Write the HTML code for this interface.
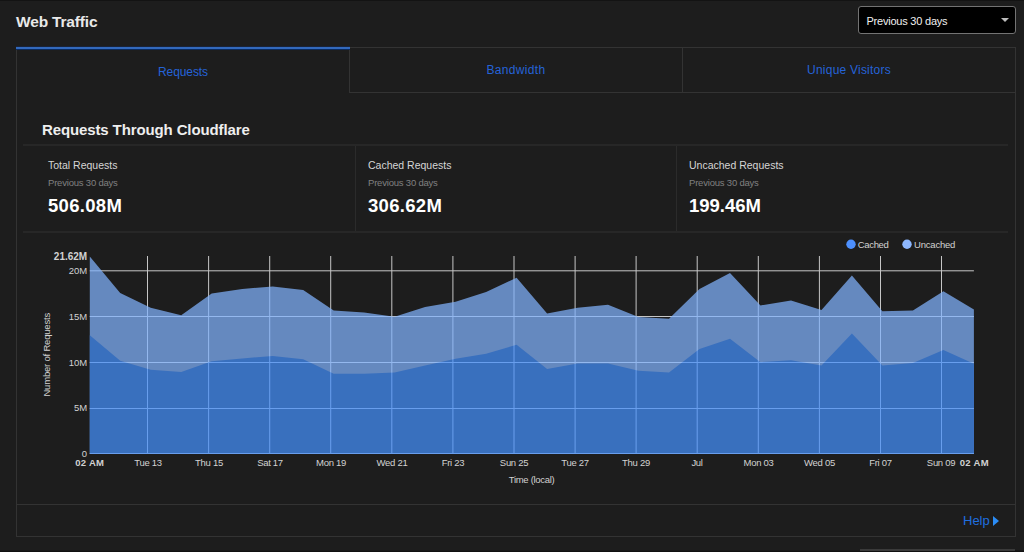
<!DOCTYPE html>
<html lang="en">
<head>
<meta charset="utf-8">
<title>Web Traffic</title>
<style>
html,body{margin:0;padding:0;}
body{width:1024px;height:552px;position:relative;overflow:hidden;background:#1d1d1d;font-family:"Liberation Sans",sans-serif;color:#e8e8e8;}
.abs{position:absolute;white-space:nowrap;}
.topband{left:0;top:0;width:1024px;height:1px;background:#131313;}
.botband{left:0;top:550px;width:1024px;height:1px;background:#181818;border-bottom:1px solid #101010;}
.botline{left:860px;top:549px;width:155px;height:2px;background:#3a3a3a;}
h1{margin:0;font-size:15.5px;font-weight:bold;line-height:20px;left:16px;top:12px;color:#e9e9e9;letter-spacing:-0.17px;}
.select{left:858px;top:6px;width:156px;height:26px;border:1px solid #737373;border-radius:3px;background:#000;}
.select span{left:7.5px;top:6.5px;font-size:11px;line-height:14px;color:#f0f0f0;letter-spacing:-0.22px;}
.select i{left:142px;top:11px;width:0;height:0;border-left:4px solid transparent;border-right:4px solid transparent;border-top:4.5px solid #bdbdbd;}
.panel{left:16px;top:47px;width:998px;height:488px;border:1px solid #333333;}
.tab{top:47px;height:45px;line-height:47px;text-align:center;font-size:12px;color:#2563d8;border-bottom:1px solid #333333;}
.tab.t1{left:17px;width:332px;border-bottom-color:transparent;line-height:50px;letter-spacing:-0.1px;}
.tab.t2{left:349px;width:332px;border-left:1px solid #333333;letter-spacing:0.33px;}
.tab.t3{left:682px;width:332px;border-left:1px solid #333333;letter-spacing:0.22px;}
.activebar{left:16px;top:47px;width:334px;height:2px;background:#3269bd;border-bottom:1px solid #0b2a5c;box-shadow:0 -1px 0 rgba(20,50,110,0.35);}
h2{margin:0;font-size:15px;font-weight:bold;line-height:20px;left:42px;top:120px;color:#eeeeee;letter-spacing:-0.12px;}
.hline{height:1px;background:#333;}
.vline{width:1px;background:#2b2b2b;}
.st-title{font-size:10.5px;line-height:14px;color:#d6d6d6;}
.st-sub{font-size:9.5px;line-height:12px;color:#808080;letter-spacing:-0.2px;margin-top:0.5px;}
.st-val{font-size:18.5px;font-weight:bold;line-height:22px;color:#fff;letter-spacing:0.3px;}
.help{left:963px;top:513px;font-size:13px;line-height:16px;color:#1f6fe0;}
.helparrow{left:993px;top:516px;width:0;height:0;border-top:5px solid transparent;border-bottom:5px solid transparent;border-left:6.5px solid #2b8cf5;}
svg{position:absolute;left:0;top:0;}
svg text{font-family:"Liberation Sans",sans-serif;fill:#d2d2d2;}
</style>
</head>
<body>
<h1 class="abs">Web Traffic</h1>
<div class="abs select"><span class="abs">Previous 30 days</span><i class="abs"></i></div>

<div class="abs panel"></div>
<div class="abs tab t1">Requests</div>
<div class="abs tab t2">Bandwidth</div>
<div class="abs tab t3">Unique Visitors</div>
<div class="abs activebar"></div>

<h2 class="abs">Requests Through Cloudflare</h2>
<div class="abs hline" style="left:23px;top:144px;width:985px;height:2px;background:#272727;"></div>
<div class="abs hline" style="left:23px;top:231px;width:985px;height:2px;background:#272727;"></div>
<div class="abs vline" style="left:355px;top:146px;height:85px;"></div>
<div class="abs vline" style="left:676px;top:146px;height:85px;"></div>

<div class="abs st-title" style="left:48px;top:158px;">Total Requests</div>
<div class="abs st-sub" style="left:48px;top:176px;">Previous 30 days</div>
<div class="abs st-val" style="left:48px;top:195px;">506.08M</div>

<div class="abs st-title" style="left:368px;top:158px;">Cached Requests</div>
<div class="abs st-sub" style="left:368px;top:176px;">Previous 30 days</div>
<div class="abs st-val" style="left:368px;top:195px;">306.62M</div>

<div class="abs st-title" style="left:689px;top:158px;">Uncached Requests</div>
<div class="abs st-sub" style="left:689px;top:176px;">Previous 30 days</div>
<div class="abs st-val" style="left:689px;top:195px;letter-spacing:0;">199.46M</div>

<svg width="1024" height="552" viewBox="0 0 1024 552">
<g fill="#c6c6c6">
<rect x="89.75" y="270.3" width="884.15" height="1"/>
<rect x="89.75" y="316" width="884.15" height="1"/>
<rect x="89.75" y="362" width="884.15" height="1"/>
<rect x="89.75" y="408" width="884.15" height="1"/>
<rect x="89.75" y="453" width="884.15" height="1"/>
<rect x="147.0" y="256" width="1" height="198"/>
<rect x="208.1" y="256" width="1" height="198"/>
<rect x="269.2" y="256" width="1" height="198"/>
<rect x="330.2" y="256" width="1" height="198"/>
<rect x="391.3" y="256" width="1" height="198"/>
<rect x="452.4" y="256" width="1" height="198"/>
<rect x="513.5" y="256" width="1" height="198"/>
<rect x="574.6" y="256" width="1" height="198"/>
<rect x="635.6" y="256" width="1" height="198"/>
<rect x="696.7" y="256" width="1" height="198"/>
<rect x="757.8" y="256" width="1" height="198"/>
<rect x="818.9" y="256" width="1" height="198"/>
<rect x="880.0" y="256" width="1" height="198"/>
<rect x="941.0" y="256" width="1" height="198"/>
</g>
<g opacity="0.72">
<path fill="#81b3fe" d="M89.75,454 L89.8,256.6 L120.2,292.9 L150.7,307.7 L181.2,315.3 L211.7,293.6 L242.2,288.9 L272.7,286.5 L303.2,290.0 L333.7,310.5 L364.1,312.4 L394.6,316.7 L425.1,307.0 L455.6,301.8 L486.1,291.9 L516.6,277.8 L547.1,313.6 L577.6,307.7 L608.0,304.7 L638.5,317.1 L669.0,318.8 L699.5,288.9 L730.0,273.1 L760.5,305.4 L791.0,300.6 L821.5,310.0 L851.9,275.4 L882.4,311.2 L912.9,310.5 L943.4,291.2 L973.9,309.4 L973.9,454 Z"/>
<path fill="#4590fd" d="M89.75,454 L89.8,335.3 L120.2,360.7 L150.7,369.7 L181.2,372.0 L211.7,361.2 L242.2,358.4 L272.7,356.0 L303.2,359.2 L333.7,373.7 L364.1,373.7 L394.6,372.5 L425.1,365.4 L455.6,358.8 L486.1,353.7 L516.6,344.7 L547.1,369.0 L577.6,363.5 L608.0,363.5 L638.5,370.8 L669.0,372.5 L699.5,349.0 L730.0,338.8 L760.5,362.2 L791.0,360.2 L821.5,365.4 L851.9,333.6 L882.4,365.4 L912.9,363.0 L943.4,350.1 L973.9,363.8 L973.9,454 Z"/>
</g>
<g font-size="9.5" text-anchor="end" letter-spacing="-0.1">
<text x="87.2" y="259.5" font-size="10" font-weight="bold" fill="#e0e0e0" letter-spacing="0">21.62M</text>
<text x="87" y="274.2">20M</text>
<text x="87" y="319.9">15M</text>
<text x="87" y="365.6">10M</text>
<text x="87" y="411.3">5M</text>
<text x="87" y="457">0</text>
</g>
<g font-size="9.5" text-anchor="middle" letter-spacing="-0.3">
<text x="89.7" y="466.4" font-weight="bold" fill="#e0e0e0" letter-spacing="0.3">02 AM</text>
<text x="148" y="466.4">Tue 13</text>
<text x="209" y="466.4">Thu 15</text>
<text x="270" y="466.4">Sat 17</text>
<text x="331" y="466.4">Mon 19</text>
<text x="392" y="466.4">Wed 21</text>
<text x="453" y="466.4">Fri 23</text>
<text x="514" y="466.4">Sun 25</text>
<text x="575" y="466.4">Tue 27</text>
<text x="636" y="466.4">Thu 29</text>
<text x="697" y="466.4">Jul</text>
<text x="758.5" y="466.4">Mon 03</text>
<text x="819.5" y="466.4">Wed 05</text>
<text x="880.5" y="466.4">Fri 07</text>
<text x="941" y="466.4">Sun 09</text>
<text x="974.3" y="466.4" font-weight="bold" fill="#e0e0e0" letter-spacing="0.3">02 AM</text>
<text x="531.6" y="482.6">Time (local)</text>
<text transform="translate(50,354.8) rotate(-90)" letter-spacing="-0.2">Number of Requests</text>
</g>
<circle cx="851" cy="244.3" r="4.7" fill="#4d90fe"/>
<text x="857.8" y="247.5" font-size="9.5" letter-spacing="-0.35">Cached</text>
<circle cx="907" cy="244.3" r="4.7" fill="#8eb8ff"/>
<text x="914" y="247.5" font-size="9.5" letter-spacing="-0.2">Uncached</text>
</svg>

<div class="abs hline" style="left:17px;top:504px;width:998px;background:#333333;"></div>
<div class="abs help">Help</div>
<div class="abs helparrow"></div>

<div class="abs topband"></div>
<div class="abs botband"></div>
<div class="abs botline"></div>
</body>
</html>
